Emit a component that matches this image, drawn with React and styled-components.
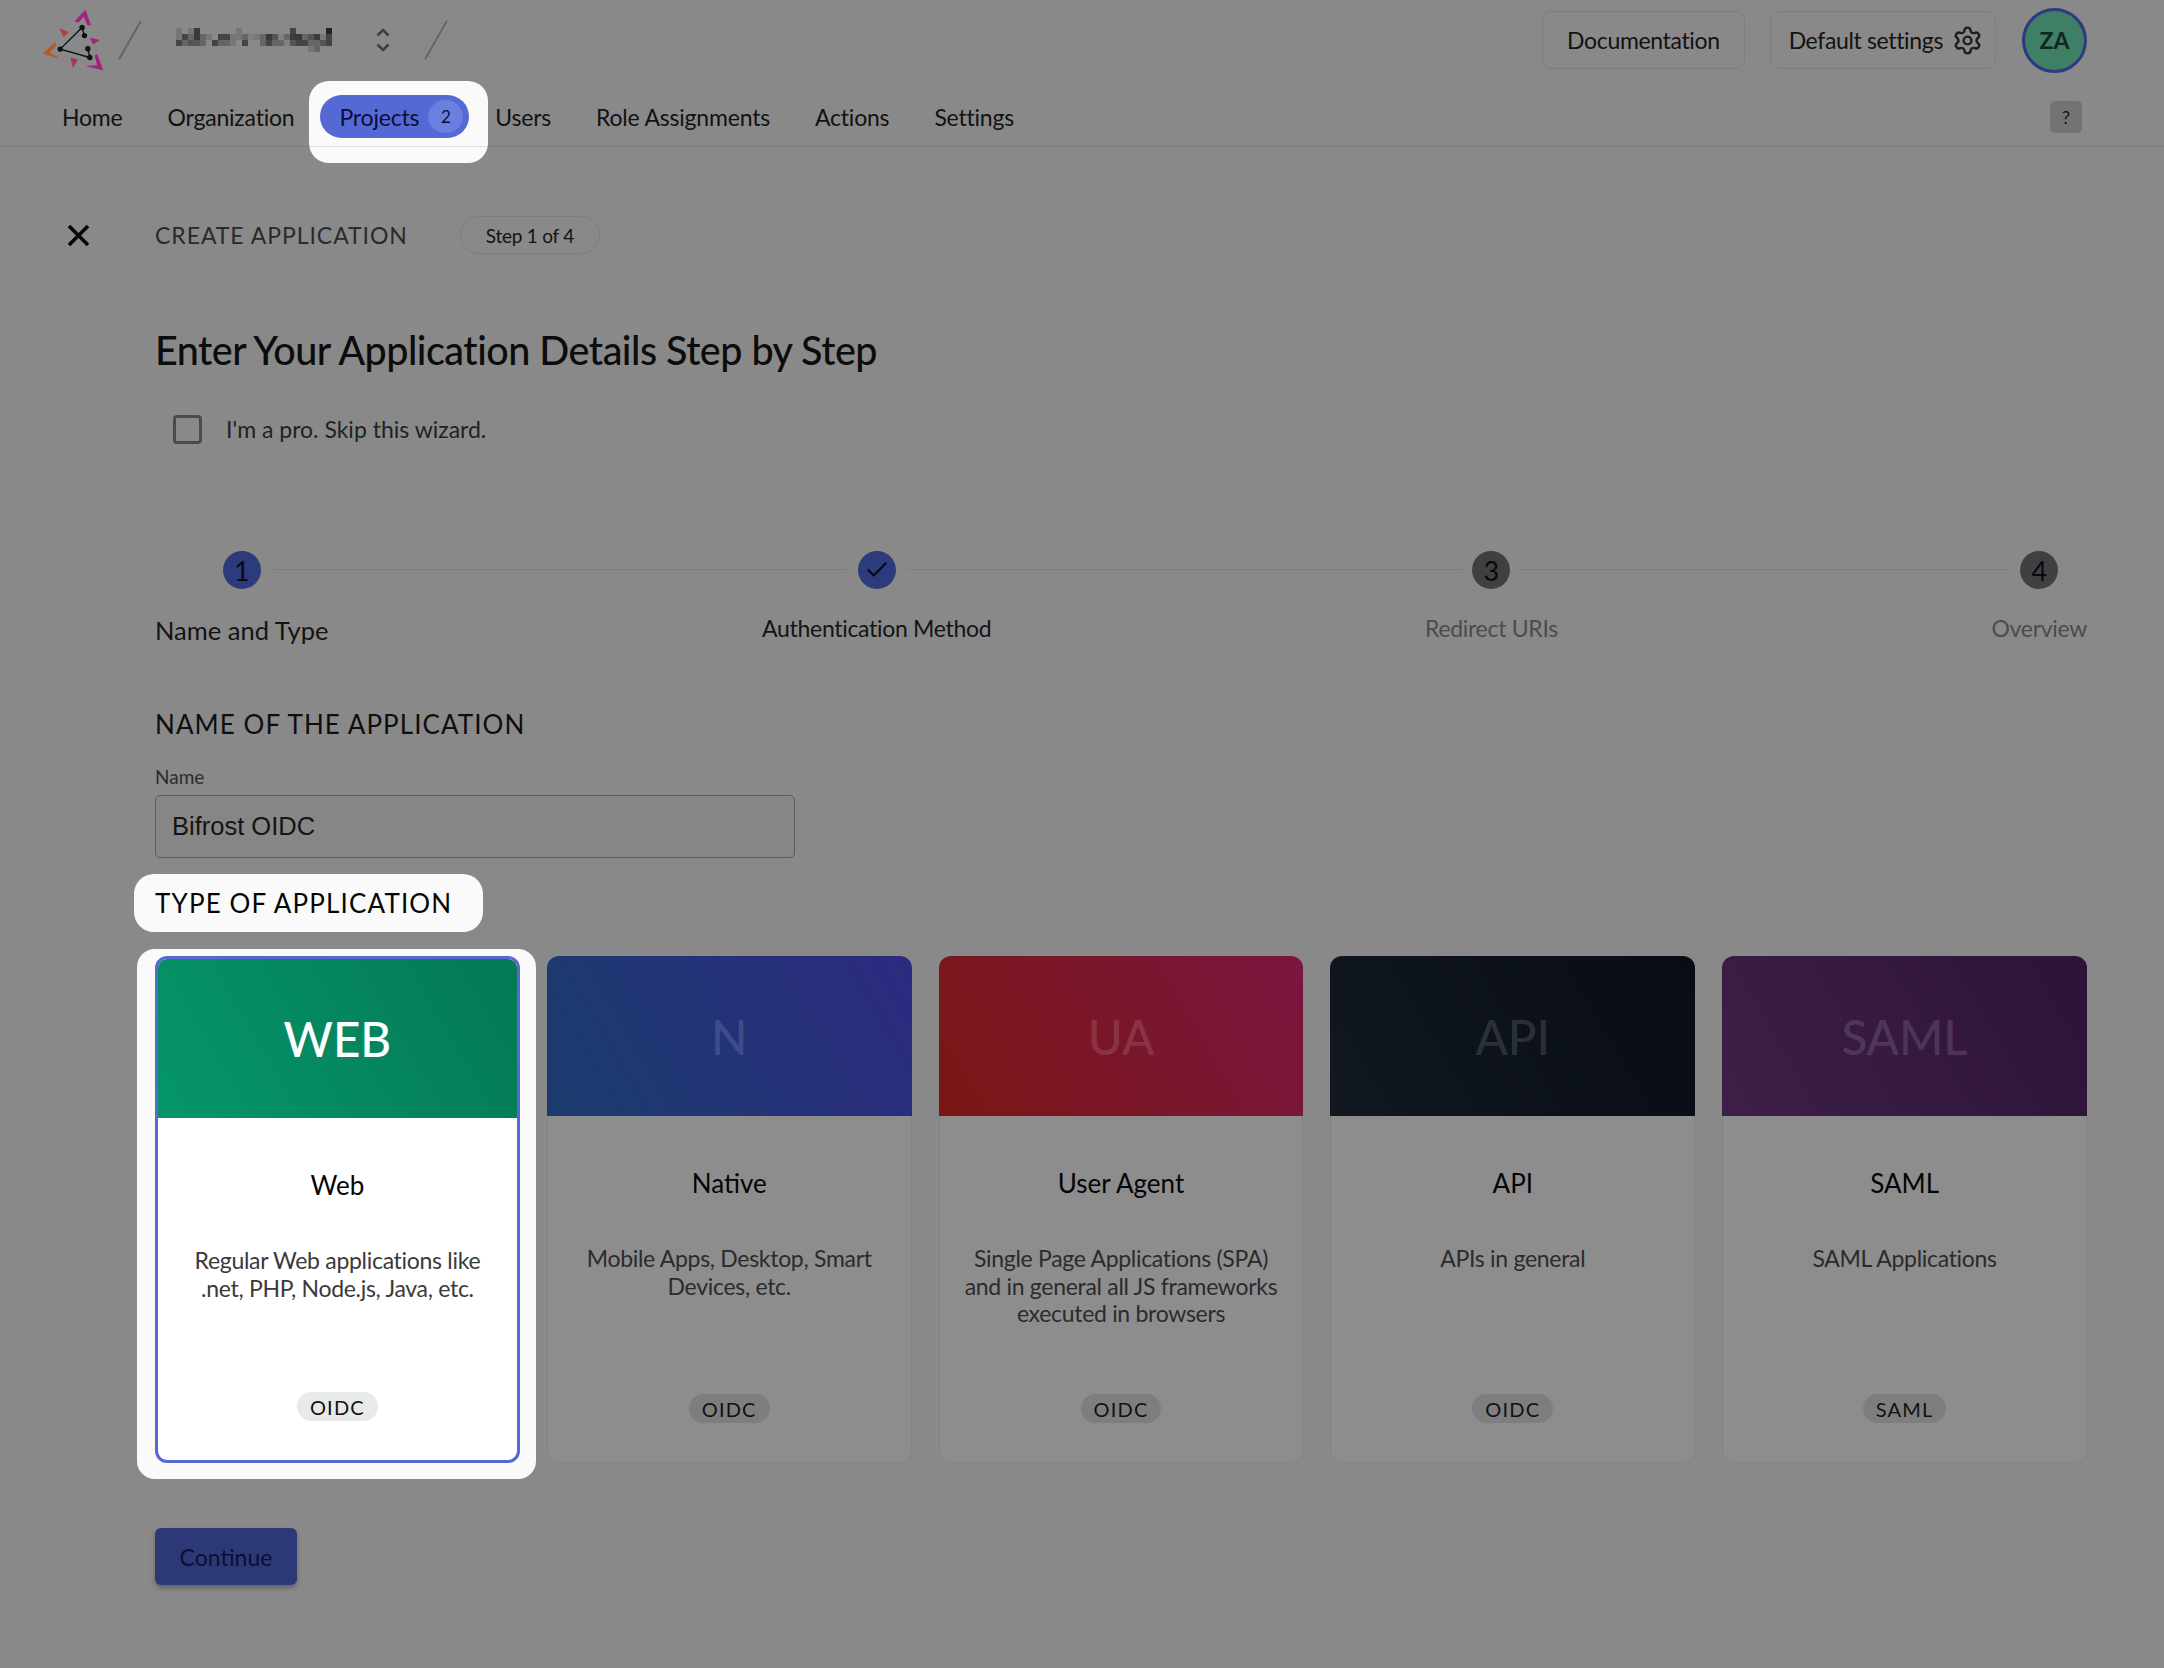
import React from "react";
import styled, { createGlobalStyle } from "styled-components";
import { Check, Settings } from "lucide-react";

const GlobalStyle = createGlobalStyle`
  html, body {
    margin: 0;
    background: #898989;
    font-family: Lato, "Liberation Sans", sans-serif;
    color: #121212;
  }
`;

const NAV_ITEMS = ["Home", "Organization", "Projects", "Users", "Role Assignments", "Actions", "Settings"];

const STEPS = [
  { label: "Name and Type", mark: "1", tone: "active", lead: true },
  { label: "Authentication Method", done: true, tone: "active" },
  { label: "Redirect URIs", mark: "3", tone: "idle" },
  { label: "Overview", mark: "4", tone: "idle" },
];

const LINES = [
  { left: -54, right: -84 },
  { left: -84, right: -37 },
  { left: -37, right: -15 },
];

const APP_TYPES = [
  { code: "WEB", title: "Web", desc: "Regular Web applications like .net, PHP, Node.js, Java, etc.", tag: "OIDC", from: "#059669", to: "#047857", active: true },
  { code: "N", title: "Native", desc: "Mobile Apps, Desktop, Smart Devices, etc.", tag: "OIDC", from: "#1b3c6e", to: "#2c2a80" },
  { code: "UA", title: "User Agent", desc: "Single Page Applications (SPA) and in general all JS frameworks executed in browsers", tag: "OIDC", from: "#7b1614", to: "#7a1640" },
  { code: "API", title: "API", desc: "APIs in general", tag: "OIDC", from: "#111820", to: "#080c14" },
  { code: "SAML", title: "SAML", desc: "SAML Applications", tag: "SAML", from: "#3d1f48", to: "#2d1338" },
];

// the org name is pixelated in the screenshot, one string per row of blocks
const MOSAIC = [
  "e.ea......e........b.....k",
  "ebdade.bbeedfedacfdaadcaeb",
  "bdccd.bdde.b..dbddfcbbddcb",
  "......................ed..",
];
const SHADES = { a: "#3a3a3a", b: "#444", c: "#555", d: "#666", e: "#777", f: "#808080", k: "#222" };

const Page = styled.div`
  isolation: isolate;
  min-height: 1668px;
  background: #898989;
`;

const TopBar = styled.div`
  height: 80px;
  padding: 0 77px 0 42px;
  display: flex;
  align-items: center;
`;

const LogoSlot = styled.span`
  flex: none;
  margin-right: 14px;
  display: flex;
`;

const Slash = styled.svg`
  width: 24px;
  height: 40px;
  flex: none;
`;

const OrgBlock = styled.div`
  margin: 0 34px;
  display: flex;
  align-items: center;
  gap: 44px;
`;

const Spacer = styled.div`
  flex: 1;
`;

const OutlineButton = styled.div`
  height: 58px;
  box-sizing: border-box;
  padding: 0 ${(p) => p.$right}px 0 ${(p) => p.$left}px;
  margin-right: ${(p) => p.$after}px;
  border: 1px solid #7e7e7e;
  border-radius: 9px;
  display: flex;
  align-items: center;
  gap: 9px;
  font-size: 23px;
  letter-spacing: -0.35px;
`;

const Avatar = styled.div`
  width: 65px;
  height: 65px;
  box-sizing: border-box;
  margin-left: 2px;
  border: 3px solid #2e3a80;
  border-radius: 50%;
  background: #3f7f65;
  color: #10261e;
  display: flex;
  align-items: center;
  justify-content: center;
  font-size: 23px;
  font-weight: 700;
`;

const Nav = styled.nav`
  padding: 15px 82px 8px 43px;
  display: flex;
  align-items: center;
  gap: 7px;
`;

const NavItem = styled.div`
  position: relative;
  height: 43px;
  padding: 0 ${(p) => (p.$active ? 6 : 19)}px 0 19px;
  border-radius: 22px;
  display: flex;
  align-items: center;
  gap: 9px;
  font-size: 23px;
  letter-spacing: -0.2px;
  background: ${(p) => (p.$active ? "#5469d4" : "transparent")};
  color: ${(p) => (p.$active ? "#0c0f33" : "#121212")};

  ${(p) =>
    p.$active &&
    `&::before {
      content: "";
      position: absolute;
      inset: -14px -19px -25px -11px;
      border-radius: 20px;
      background: #fafafa;
      z-index: -1;
    }`}
`;

const NavCount = styled.span`
  width: 35px;
  height: 33px;
  border-radius: 50%;
  background: #6b7fe0;
  display: flex;
  align-items: center;
  justify-content: center;
  font-size: 17px;
`;

const HelpChip = styled.div`
  margin-left: auto;
  width: 32px;
  height: 32px;
  border-radius: 5px;
  background: #737373;
  display: flex;
  align-items: center;
  justify-content: center;
  font-size: 18px;
`;

const Divider = styled.div`
  position: relative;
  height: 1px;
  background: rgba(0, 0, 0, 0.1);
`;

const TitleRow = styled.div`
  margin-top: 69px;
  padding-left: 67px;
  height: 38px;
  display: flex;
  align-items: center;
`;

const CloseIcon = styled.svg`
  width: 23px;
  height: 23px;
  flex: none;
  margin-right: 65px;
`;

const WizardLabel = styled.div`
  font-size: 23px;
  letter-spacing: 0.95px;
  color: #2a2a2a;
  margin-right: 52px;
`;

const StepBadge = styled.div`
  height: 38px;
  box-sizing: border-box;
  padding: 0 25px;
  border: 1px solid #7e7e7e;
  border-radius: 19px;
  display: flex;
  align-items: center;
  font-size: 19px;
  letter-spacing: -0.25px;
`;

const Content = styled.main`
  margin: 0 77px 0 155px;
`;

const Heading = styled.h1`
  margin: 71px 0 0;
  font-size: 39.5px;
  line-height: 50px;
  font-weight: 500;
  letter-spacing: -0.5px;
  color: #0c0c0c;
`;

const SkipRow = styled.label`
  margin-top: 39px;
  padding-left: 18px;
  height: 30px;
  display: flex;
  align-items: center;
  gap: 24px;
  font-size: 23px;
  color: #222;
`;

const CheckBox = styled.span`
  width: 29px;
  height: 29px;
  box-sizing: border-box;
  border: 3px solid #4b4b4b;
  border-radius: 4px;
`;

const Stepper = styled.div`
  margin-top: 107px;
  display: flex;
  justify-content: space-between;
`;

const Step = styled.div`
  display: flex;
  flex-direction: column;
  align-items: center;
`;

const StepCircle = styled.div`
  width: 38px;
  height: 38px;
  border-radius: 50%;
  background: ${(p) => (p.$tone === "active" ? "#2d3a7c" : "#404040")};
  color: #080812;
  display: flex;
  align-items: center;
  justify-content: center;
  font-size: 27px;
`;

const StepLabel = styled.div`
  margin-top: 24px;
  font-size: ${(p) => (p.$lead ? 25.5 : 23)}px;
  line-height: ${(p) => (p.$lead ? 34 : 30)}px;
  letter-spacing: ${(p) => (p.$lead ? 0 : -0.3)}px;
  white-space: nowrap;
  color: ${(p) => (p.$tone === "active" ? "#141414" : "#4c4c4c")};
`;

const Connector = styled.div`
  position: relative;
  flex: 1;

  &::before {
    content: "";
    position: absolute;
    top: 18px;
    left: ${(p) => p.$left}px;
    right: ${(p) => p.$right}px;
    height: 1px;
    background: #7c7c7c;
  }
`;

const SectionTitle = styled.h2`
  margin: 62px 0 0;
  font-size: 26px;
  line-height: 30px;
  font-weight: 400;
  letter-spacing: 1.06px;
  color: #0e0e0e;
`;

const FieldLabel = styled.div`
  margin-top: 28px;
  font-size: 19px;
  line-height: 20px;
  color: #2c2c2c;
`;

const NameInput = styled.div`
  margin-top: 8px;
  width: 640px;
  height: 63px;
  box-sizing: border-box;
  padding: 0 16px;
  border: 1px solid #5e5e5e;
  border-radius: 5px;
  background: #868686;
  display: flex;
  align-items: center;
  font-family: "Liberation Sans", Arial, sans-serif;
  font-size: 25.5px;
  color: #141414;
`;

const TypeTitle = styled.h2`
  display: inline-block;
  margin: 16px 0 0 -21px;
  padding: 0 31px 0 21px;
  border-radius: 20px;
  background: #fafafa;
  font-size: 26px;
  line-height: 58px;
  font-weight: 400;
  letter-spacing: 1.15px;
  color: #050505;
`;

const CardGrid = styled.div`
  margin-top: 24px;
  display: grid;
  grid-template-columns: repeat(5, 1fr);
  gap: 27px;
`;

const CardSlot = styled.div`
  position: relative;

  ${(p) =>
    p.$active &&
    `&::before {
      content: "";
      position: absolute;
      inset: -7px -16px -16px -18px;
      border-radius: 18px;
      background: #fafafa;
      z-index: -1;
    }`}
`;

const Card = styled.div`
  height: 507px;
  box-sizing: border-box;
  display: flex;
  flex-direction: column;
  overflow: hidden;
  border-radius: 12px;
  border: ${(p) => (p.$active ? "3px solid #5469d4" : "none")};
  background: ${(p) => (p.$active ? "#fff" : "#8d8d8d")};
`;

const CardHead = styled.div`
  height: ${(p) => (p.$active ? 159 : 160)}px;
  flex: none;
  display: flex;
  align-items: center;
  justify-content: center;
  background: linear-gradient(60deg, ${(p) => `${p.$from}, ${p.$to}`});
  color: ${(p) => (p.$active ? "#fff" : "rgba(255, 255, 255, 0.14)")};
  font-size: 47.5px;
  font-weight: 500;
`;

const CardBody = styled.div`
  flex: 1;
  padding: 51px 20px 39px;
  display: flex;
  flex-direction: column;
  align-items: center;
  text-align: center;
  border: ${(p) => (p.$active ? "none" : "1px solid #838383")};
  border-top: none;
  border-radius: 0 0 12px 12px;
`;

const CardTitle = styled.div`
  font-size: 26px;
  line-height: 32px;
  color: #050505;
`;

const CardDesc = styled.div`
  margin-top: 46px;
  font-size: 23px;
  line-height: 27.5px;
  letter-spacing: -0.3px;
  color: ${(p) => (p.$active ? "#3a3a3a" : "#2b2b2b")};
`;

const CardTag = styled.div`
  margin-top: auto;
  height: 29px;
  padding: 0 13px;
  border-radius: 15px;
  background: ${(p) => (p.$active ? "#e8e9e9" : "#7e7e7e")};
  display: flex;
  align-items: center;
  font-size: 20px;
  letter-spacing: 1.2px;
  color: #111;
`;

const ContinueButton = styled.div`
  margin-top: 65px;
  width: 142px;
  height: 57px;
  border-radius: 6px;
  background: #2d3877;
  box-shadow: 0 3px 5px rgba(0, 0, 0, 0.28);
  display: flex;
  align-items: center;
  justify-content: center;
  font-size: 23px;
  color: #0c0f33;
`;

function Logo() {
  return (
    <svg width="62" height="62" viewBox="36 28 184 184">
      <path fill="#a81f82" d="M132 65 165 30 182 78 170 75 160 50 145 68Z" />
      <path fill="#a81f82" d="M165 197 218 210 200 162 192 165 200 195Z" />
      <path fill="#b85a1e" d="M38 160 75 127 78 137 58 158 85 172 85 176Z" />
      <path fill="#a8433f" d="M88 85 115 96 100 112Z" />
      <path fill="#a81f82" d="M178 113 208 120 188 133Z" />
      <path fill="#a33a52" d="M120 173 143 178 128 203Z" />
      <path fill="none" stroke="#111" strokeWidth="4" d="M155 83 90 147 178 172M155 83 162 107M172 146 178 172" />
      <circle cx="155" cy="83" r="8" fill="#111" />
      <circle cx="162" cy="107" r="8" fill="#111" />
      <circle cx="90" cy="147" r="8" fill="#111" />
      <circle cx="172" cy="146" r="8" fill="#111" />
      <circle cx="178" cy="172" r="8" fill="#111" />
    </svg>
  );
}

function SlashMark() {
  return (
    <Slash viewBox="0 0 24 40">
      <path d="M1.5 38.5 22.5 1.5" stroke="#666" strokeWidth="2" strokeLinecap="round" />
    </Slash>
  );
}

function OrgMosaic() {
  return (
    <svg width="156" height="24" viewBox="0 0 156 24">
      {MOSAIC.map((row, y) =>
        row.split("").map((c, x) =>
          SHADES[c] ? <rect key={x + "-" + y} x={x * 6} y={y * 6} width="6" height="6" fill={SHADES[c]} /> : null,
        ),
      )}
    </svg>
  );
}

function UpDown() {
  return (
    <svg width="14" height="24" viewBox="0 0 14 24" fill="none" stroke="#3f3f3f" strokeWidth="2.6">
      <path d="M1.5 7.5 7 2l5.5 5.5M1.5 16.5 7 22l5.5-5.5" />
    </svg>
  );
}

export default function App() {
  return (
    <Page>
      <GlobalStyle />
      <header>
        <TopBar>
          <LogoSlot>
            <Logo />
          </LogoSlot>
          <SlashMark />
          <OrgBlock>
            <OrgMosaic />
            <UpDown />
          </OrgBlock>
          <SlashMark />
          <Spacer />
          <OutlineButton $left={24} $right={24} $after={25}>
            Documentation
          </OutlineButton>
          <OutlineButton $left={18} $right={12} $after={24}>
            Default settings
            <Settings size={31} strokeWidth={1.9} color="#1e1e1e" />
          </OutlineButton>
          <Avatar>ZA</Avatar>
        </TopBar>
        <Nav>
          {NAV_ITEMS.map((item) => (
            <NavItem key={item} $active={item === "Projects"}>
              {item}
              {item === "Projects" && <NavCount>2</NavCount>}
            </NavItem>
          ))}
          <HelpChip>?</HelpChip>
        </Nav>
        <Divider />
      </header>

      <TitleRow>
        <CloseIcon viewBox="0 0 23 23">
          <path d="M2 2 21 21M21 2 2 21" stroke="#050505" strokeWidth="3.6" />
        </CloseIcon>
        <WizardLabel>CREATE APPLICATION</WizardLabel>
        <StepBadge>Step 1 of 4</StepBadge>
      </TitleRow>

      <Content>
        <Heading>Enter Your Application Details Step by Step</Heading>
        <SkipRow>
          <CheckBox />
          I'm a pro. Skip this wizard.
        </SkipRow>

        <Stepper>
          {STEPS.map((step, i) => (
            <React.Fragment key={step.label}>
              <Step>
                <StepCircle $tone={step.tone}>
                  {step.done ? <Check size={26} strokeWidth={2} color="#080812" /> : step.mark}
                </StepCircle>
                <StepLabel $tone={step.tone} $lead={step.lead}>
                  {step.label}
                </StepLabel>
              </Step>
              {i < LINES.length && <Connector $left={LINES[i].left} $right={LINES[i].right} />}
            </React.Fragment>
          ))}
        </Stepper>

        <SectionTitle>NAME OF THE APPLICATION</SectionTitle>
        <FieldLabel>Name</FieldLabel>
        <NameInput>Bifrost OIDC</NameInput>

        <TypeTitle>TYPE OF APPLICATION</TypeTitle>

        <CardGrid>
          {APP_TYPES.map((type) => (
            <CardSlot key={type.code} $active={type.active}>
              <Card $active={type.active}>
                <CardHead $from={type.from} $to={type.to} $active={type.active}>
                  {type.code}
                </CardHead>
                <CardBody $active={type.active}>
                  <CardTitle>{type.title}</CardTitle>
                  <CardDesc $active={type.active}>{type.desc}</CardDesc>
                  <CardTag $active={type.active}>{type.tag}</CardTag>
                </CardBody>
              </Card>
            </CardSlot>
          ))}
        </CardGrid>

        <ContinueButton>Continue</ContinueButton>
      </Content>
    </Page>
  );
}
